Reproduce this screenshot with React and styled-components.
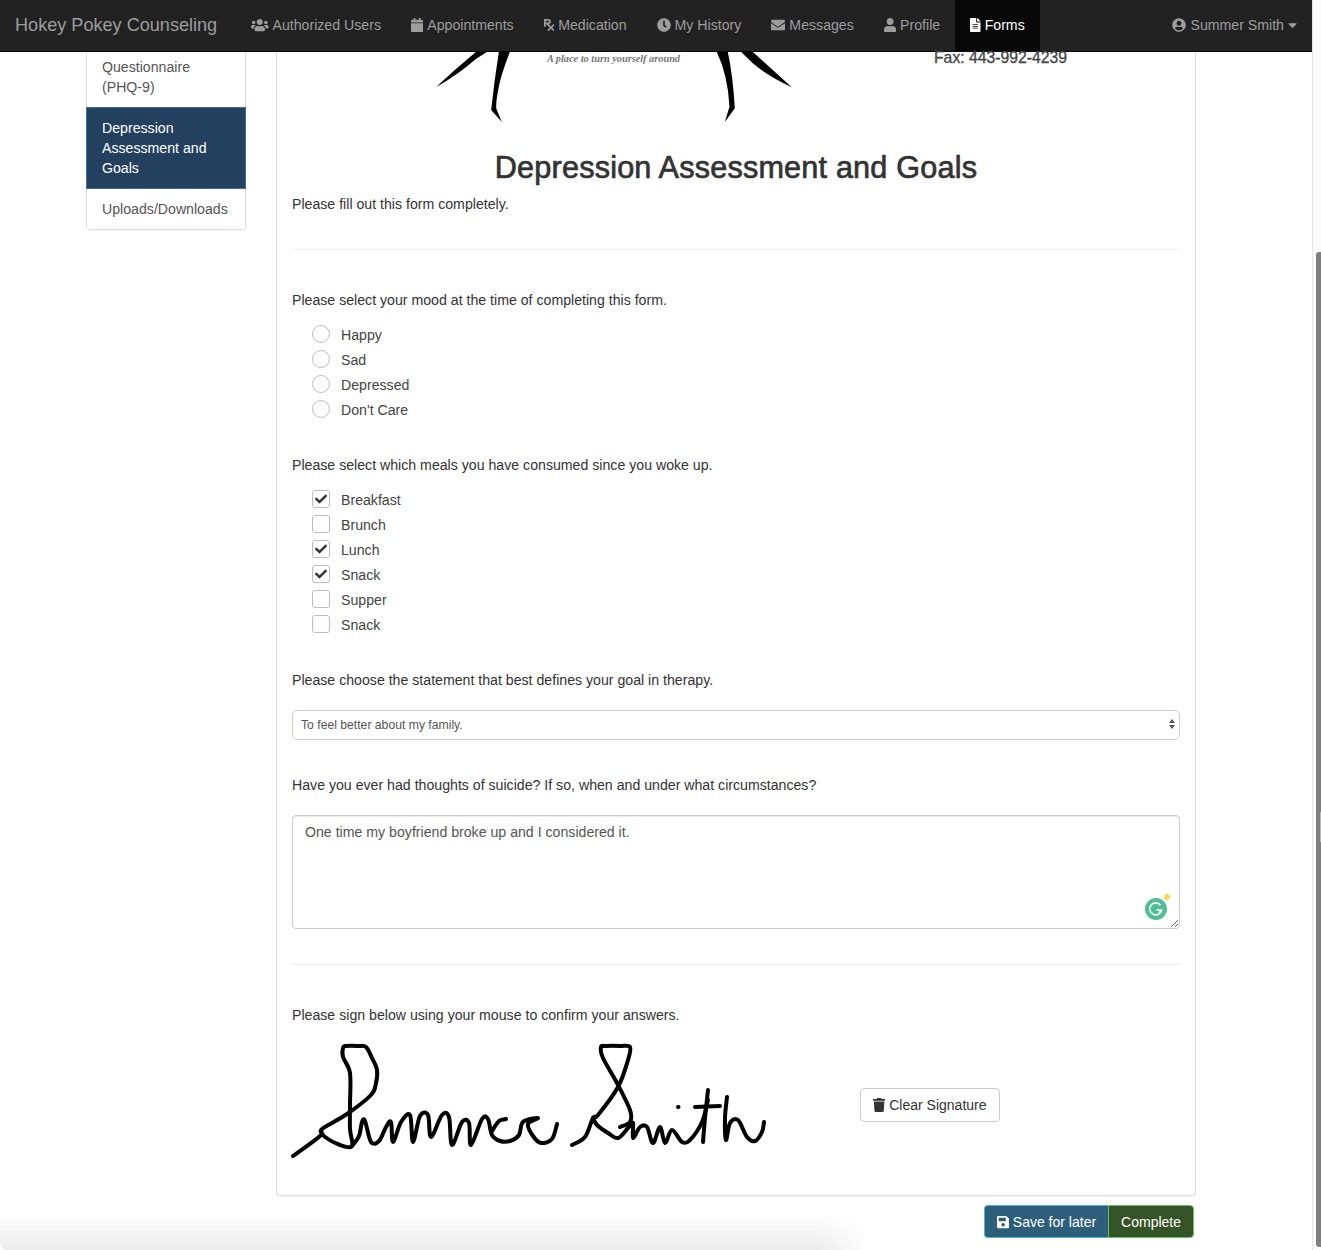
import React from 'react';
import styled, { createGlobalStyle } from 'styled-components';
import {
    FaUsers, FaCalendar, FaPrescription, FaClock, FaEnvelope, FaUser,
    FaFileAlt, FaUserCircle, FaCaretDown, FaCheck, FaTrash, FaSave,
} from 'react-icons/fa';

const NAV_LINKS = [
    { label: 'Authorized Users', icon: FaUsers, iconWidth: 17.5 },
    { label: 'Appointments', icon: FaCalendar, iconWidth: 12.25 },
    { label: 'Medication', icon: FaPrescription, iconWidth: 10.5 },
    { label: 'My History', icon: FaClock, iconWidth: 14 },
    { label: 'Messages', icon: FaEnvelope, iconWidth: 14 },
    { label: 'Profile', icon: FaUser, iconWidth: 12.25 },
    { label: 'Forms', icon: FaFileAlt, iconWidth: 10.5, active: true },
];

const MOODS = ['Happy', 'Sad', 'Depressed', "Don't Care"];

const MEALS = [
    { label: 'Breakfast', checked: true },
    { label: 'Brunch' },
    { label: 'Lunch', checked: true },
    { label: 'Snack', checked: true },
    { label: 'Supper' },
    { label: 'Snack' },
];

// signature strokes, in page pixels
const SIGNATURE_STROKES = [
    [[293, 1156], [320, 1136], [322, 1129], [347, 1114], [371, 1095], [376, 1083], [377, 1070], [372, 1058], [366, 1047], [358, 1046], [346, 1046], [343, 1048], [343, 1057], [350, 1073], [350, 1105], [350, 1129], [352, 1146], [340, 1145], [325, 1137], [321, 1131]],
    [[352, 1146], [359, 1136], [362, 1122], [365, 1121], [371, 1142], [379, 1141], [386, 1127], [391, 1122], [393, 1142], [401, 1122], [410, 1115], [413, 1142], [420, 1116], [428, 1115], [431, 1137], [442, 1115], [449, 1117], [452, 1145], [462, 1122], [469, 1123], [471, 1145], [482, 1119], [488, 1119], [492, 1135], [500, 1141], [510, 1141], [519, 1135], [523, 1122], [538, 1118], [528, 1124], [533, 1136], [541, 1143], [552, 1139], [557, 1124]],
    [[492, 1131], [499, 1121], [506, 1119]],
    [[572, 1145], [585, 1137], [593, 1118], [598, 1115], [618, 1087], [628, 1060], [630, 1047], [620, 1046], [606, 1046], [601, 1047], [603, 1058], [617, 1083], [630, 1110], [630, 1122], [620, 1127]],
    [[593, 1118], [597, 1125], [608, 1133], [618, 1138], [628, 1128], [633, 1123], [633, 1138], [640, 1127], [647, 1127], [653, 1143], [660, 1127], [665, 1143], [672, 1130], [682, 1142], [690, 1140], [702, 1122], [708, 1100]],
    [[708, 1090], [705, 1118], [703, 1142]],
    [[695, 1107], [720, 1106]],
    [[727, 1097], [725, 1118], [726, 1140], [730, 1123], [738, 1120], [747, 1137], [755, 1141], [762, 1132], [764, 1122]],
    [[678, 1107], [678.5, 1107]],
];

// catmull-rom through the points, so the pen line stays round
function strokePath(points) {
    let d = `M${points[0][0]} ${points[0][1]}`;
    for (let i = 0; i < points.length - 1; i++) {
        const p0 = points[i - 1] || points[i];
        const p1 = points[i];
        const p2 = points[i + 1];
        const p3 = points[i + 2] || p2;
        const c1x = p1[0] + (p2[0] - p0[0]) / 6;
        const c1y = p1[1] + (p2[1] - p0[1]) / 6;
        const c2x = p2[0] - (p3[0] - p1[0]) / 6;
        const c2y = p2[1] - (p3[1] - p1[1]) / 6;
        d += ` C${c1x} ${c1y} ${c2x} ${c2y} ${p2[0]} ${p2[1]}`;
    }
    return d;
}

function App() {
    return (
        <Page>
            <GlobalStyle />
            <Viewport>
                <NavBar>
                    <Brand>Hokey Pokey Counseling</Brand>
                    <NavList>
                        {NAV_LINKS.map(link => (
                            <NavLink key={link.label} $active={link.active} $iconWidth={link.iconWidth}>
                                <link.icon />
                                {link.label}
                            </NavLink>
                        ))}
                    </NavList>
                    <UserMenu>
                        <FaUserCircle />
                        Summer Smith
                        <FaCaretDown />
                    </UserMenu>
                </NavBar>

                <Content>
                    <SideMenu>
                        <SideItem $clipped>Questionnaire (PHQ-9)</SideItem>
                        <SideItem $active>Depression Assessment and Goals</SideItem>
                        <SideItem>Uploads/Downloads</SideItem>
                    </SideMenu>

                    <Column>
                        <Panel>
                            <LogoRow>
                                <Legs viewBox="100 21 230 210">
                                    <path d="M225 21 L258 21 L225 42 Q170 90 105 127 Q160 75 225 21 Z" />
                                    <path d="M294 21 L327 21 Q300 90 293 130 Q285 170 286 190 L303 231 L271 195 Q280 110 294 21 Z" />
                                </Legs>
                                <Tagline>A place to turn yourself around</Tagline>
                                <Legs viewBox="950 21 230 210">
                                    <path d="M952 21 L985 21 Q1000 90 1006 190 L976 231 L990 185 Q985 90 952 21 Z" />
                                    <path d="M1025 21 L1060 21 L1177 127 Q1100 90 1060 55 Z" />
                                </Legs>
                                <FaxNumber>Fax: 443-992-4239</FaxNumber>
                            </LogoRow>

                            <Title>Depression Assessment and Goals</Title>
                            <Text>Please fill out this form completely.</Text>
                            <Divider $top={35} />

                            <Text>Please select your mood at the time of completing this form.</Text>
                            <OptionList>
                                {MOODS.map(mood => (
                                    <Option key={mood}>
                                        <RadioMark />
                                        {mood}
                                    </Option>
                                ))}
                            </OptionList>

                            <Text>Please select which meals you have consumed since you woke up.</Text>
                            <OptionList>
                                {MEALS.map((meal, i) => (
                                    <Option key={i}>
                                        <CheckMark>{meal.checked && <FaCheck />}</CheckMark>
                                        {meal.label}
                                    </Option>
                                ))}
                            </OptionList>

                            <Text>Please choose the statement that best defines your goal in therapy.</Text>
                            <SelectWrap>
                                <GoalSelect defaultValue="family">
                                    <option value="family">To feel better about my family.</option>
                                </GoalSelect>
                            </SelectWrap>

                            <Text>Have you ever had thoughts of suicide? If so, when and under what circumstances?</Text>
                            <TextAreaWrap>
                                <Answer defaultValue="One time my boyfriend broke up and I considered it." />
                                <GrammarlyBadge>
                                    <svg viewBox="0 0 22 22" width="22" height="22">
                                        <path d="M15.5 7.2 A6 6 0 1 0 16.6 12 L11.5 12 M16.8 12 L14 15" fill="none" stroke="#fff" strokeWidth="1.7" />
                                    </svg>
                                </GrammarlyBadge>
                            </TextAreaWrap>
                            <Divider $top={35} />

                            <Text>Please sign below using your mouse to confirm your answers.</Text>
                            <SignatureRow>
                                <Signature viewBox="292 1045 488 110">
                                    {SIGNATURE_STROKES.map((points, i) => (
                                        <path key={i} d={strokePath(points)} />
                                    ))}
                                </Signature>
                                <ClearButton>
                                    <FaTrash />
                                    Clear Signature
                                </ClearButton>
                            </SignatureRow>
                        </Panel>

                        <ActionBar>
                            <ActionButton $bg="#2d5f7b" $line="#4fb4d8">
                                <FaSave />
                                Save for later
                            </ActionButton>
                            <ActionButton $bg="#345427" $line="#6abf66">Complete</ActionButton>
                        </ActionBar>
                    </Column>
                </Content>
                <WindowShadow />
            </Viewport>

            <ScrollTrack>
                <ScrollThumb>
                    <ThumbNotch />
                </ScrollThumb>
            </ScrollTrack>
        </Page>
    );
}

const GlobalStyle = createGlobalStyle`
    html, body {
        margin: 0;
        height: 1250px;
        overflow: hidden;
        background: #fff;
        font-family: "Liberation Sans", Arial, sans-serif;
        font-size: 14.15px;
        line-height: 20px;
        color: #333;
    }
    * {
        box-sizing: border-box;
    }
`;

const Page = styled.div`
    display: flex;
    height: 1250px;
`;

const Viewport = styled.div`
    position: relative;
    flex: 1;
    min-width: 0;
    height: 1250px;
    overflow: hidden;
`;

const NavBar = styled.nav`
    display: flex;
    align-items: stretch;
    height: 52px;
    padding-left: 15px;
    padding-right: 15px;
    background: #222;
    border-bottom: 1px solid #080808;
    color: #9d9d9d;
`;

const Brand = styled.div`
    width: 221px;
    font-size: 18.1px;
    line-height: 50px;
    white-space: nowrap;
`;

const NavList = styled.div`
    display: flex;
`;

const NavLink = styled.a`
    display: flex;
    align-items: center;
    gap: 4px;
    height: 51px;
    padding: 0 15px 1px;
    white-space: nowrap;
    background: ${props => props.$active ? '#080808' : 'transparent'};
    color: ${props => props.$active ? '#fff' : '#9d9d9d'};

    svg {
        width: ${props => props.$iconWidth}px;
        height: 14px;
    }
`;

const UserMenu = styled.div`
    display: flex;
    align-items: center;
    gap: 4px;
    margin-left: auto;
    padding-bottom: 1px;
    white-space: nowrap;

    svg {
        width: 14px;
        height: 14px;
    }

    svg:last-child {
        width: 9px;
    }
`;

const Content = styled.div`
    display: flex;
    align-items: flex-start;
    gap: 30px;
    padding-left: 86px;
`;

const SideMenu = styled.div`
    width: 160px;
    border: 1px solid #ddd;
    border-top: 0;
    border-radius: 0 0 4px 4px;
    box-shadow: 0 1px 1px rgba(0, 0, 0, .05);
`;

const SideItem = styled.div`
    padding: ${props => props.$clipped ? '5px 15px 10px' : '10px 15px'};
    color: ${props => props.$active ? '#fff' : '#555'};
    background: ${props => props.$active ? '#24405f' : '#fff'};
    margin: ${props => props.$active ? '0 -1px' : '0'};
    border: ${props => props.$active ? '1px solid #3a6ea5' : '0'};
`;

const Column = styled.div`
    width: 920px;
`;

const Panel = styled.main`
    padding: 0 15px 40px;
    border: 1px solid #ddd;
    border-top: 0;
    border-radius: 0 0 4px 4px;
    box-shadow: 0 1px 1px rgba(0, 0, 0, .05);
`;

const LogoRow = styled.div`
    display: flex;
    align-items: flex-start;
    height: 70px;
    padding-left: 142px;
`;

const Legs = styled.svg`
    flex: none;
    width: 77px;
    height: 70px;
    fill: #000;
`;

const Tagline = styled.div`
    width: 205px;
    font-family: "Liberation Serif", serif;
    font-size: 10.3px;
    line-height: 14px;
    font-style: italic;
    font-weight: bold;
    text-align: center;
    color: #777;
`;

const FaxNumber = styled.div`
    margin-left: 141px;
    margin-top: -4px;
    font-size: 15.76px;
    line-height: 20px;
    color: #444;
    -webkit-text-stroke: .3px #444;
    white-space: nowrap;
`;

const Title = styled.h2`
    margin: 29px 0 10px;
    font-size: 30.6px;
    line-height: 33px;
    font-weight: normal;
    letter-spacing: .2px;
    -webkit-text-stroke: .7px #333;
    text-align: center;
    color: #333;
`;

const Text = styled.p`
    margin: 0;
`;

const Divider = styled.hr`
    margin: ${props => props.$top}px 0 40px;
    border: 0;
    border-top: 1px solid #eee;
`;

const OptionList = styled.div`
    display: flex;
    flex-direction: column;
    margin: 13px 0 32px;
`;

const Option = styled.label`
    display: flex;
    align-items: center;
    height: 25px;
    padding-left: 20px;
    padding-bottom: 1px;
    color: #444;
`;

const RadioMark = styled.span`
    flex: none;
    width: 18px;
    height: 18px;
    margin-right: 11px;
    margin-bottom: 2px;
    border: 1.5px solid #bdbdbd;
    border-radius: 50%;
    background: #fff;
`;

const CheckMark = styled(RadioMark)`
    display: flex;
    align-items: center;
    justify-content: center;
    border-radius: 3px;
    font-size: 12px;
    color: #333;
`;

const SelectWrap = styled.div`
    position: relative;
    margin: 20px 0 35px;

    &::before, &::after {
        content: "";
        position: absolute;
        right: 5px;
        border-left: 3px solid transparent;
        border-right: 3px solid transparent;
    }

    &::before {
        top: 9px;
        border-bottom: 4px solid #555;
    }

    &::after {
        top: 15px;
        border-top: 4px solid #555;
    }
`;

const GoalSelect = styled.select`
    display: block;
    width: 100%;
    height: 30px;
    padding: 0 8px;
    appearance: none;
    background: #fff;
    border: 1.5px solid #ccc;
    border-radius: 5px;
    font-family: inherit;
    font-size: 12.2px;
    color: #555;
`;

const TextAreaWrap = styled.div`
    position: relative;
    margin-top: 20px;
`;

const Answer = styled.textarea`
    display: block;
    width: 100%;
    height: 114px;
    padding: 6px 12px;
    border: 1.5px solid #ccc;
    border-radius: 4px;
    box-shadow: inset 0 1px 1px rgba(0, 0, 0, .075);
    font-family: inherit;
    font-size: 14.15px;
    line-height: 20px;
    color: #555;
`;

const GrammarlyBadge = styled.div`
    position: absolute;
    right: 13px;
    bottom: 9px;
    width: 22px;
    height: 22px;
    border-radius: 50%;
    background: #4fbd95;

    svg {
        display: block;
    }

    &::after {
        content: "";
        position: absolute;
        top: -4px;
        right: -3px;
        width: 6px;
        height: 6px;
        border-radius: 50%;
        background: #fbd84a;
    }
`;

const SignatureRow = styled.div`
    display: flex;
    align-items: center;
    height: 110px;
    margin-top: 20px;
`;

const Signature = styled.svg`
    flex: none;
    width: 488px;
    height: 110px;
    overflow: visible;

    path {
        fill: none;
        stroke: #000;
        stroke-width: 4;
        stroke-linecap: round;
        stroke-linejoin: round;
    }
`;

const ClearButton = styled.button`
    display: flex;
    align-items: center;
    gap: 4px;
    height: 34px;
    margin-left: 80px;
    margin-top: 10px;
    padding: 0 12px;
    background: #fff;
    border: 1px solid #ccc;
    border-radius: 4px;
    font-family: inherit;
    font-size: 14px;
    color: #333;

    svg {
        width: 12.25px;
        height: 14px;
    }
`;

const ActionBar = styled.div`
    display: flex;
    justify-content: flex-end;
    margin-top: 9px;
    padding-right: 2px;
`;

const ActionButton = styled.button`
    display: flex;
    align-items: center;
    gap: 4px;
    height: 33px;
    padding: 0 12px;
    background: ${props => props.$bg};
    border: 1px solid ${props => props.$line};
    color: #fff;
    font-family: inherit;
    font-size: 14px;

    svg {
        width: 12.25px;
        height: 14px;
    }

    &:first-child {
        border-radius: 4px 0 0 4px;
        border-right: 0;
    }

    &:last-child {
        border-radius: 0 4px 4px 0;
    }
`;

const WindowShadow = styled.div`
    position: absolute;
    left: 0;
    bottom: 0;
    width: 870px;
    height: 36px;
    border-bottom-left-radius: 6px;
    background: linear-gradient(to bottom, rgba(235, 235, 235, 0), rgba(235, 235, 235, 1));
    mask-image: linear-gradient(to right, #000 94%, transparent);
`;

const ScrollTrack = styled.div`
    flex: none;
    width: 9px;
    padding: 252px 0 3px 3px;
    background: #fafafa;
    border-left: 1px solid #e6e6e6;
`;

const ScrollThumb = styled.div`
    position: relative;
    height: 100%;
    background: #7f7f7f;
    border-radius: 3px 0 0 3px;
`;

const ThumbNotch = styled.div`
    position: absolute;
    top: 560px;
    right: 0;
    width: 1px;
    height: 30px;
    background: #bbb;
`;

export default App;
